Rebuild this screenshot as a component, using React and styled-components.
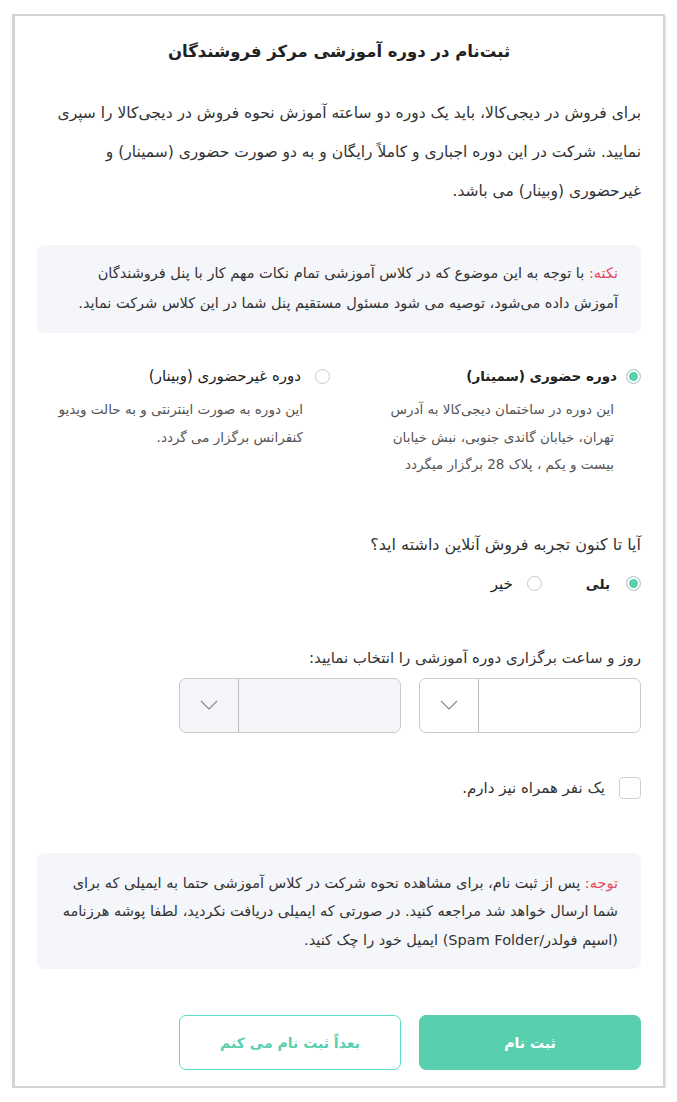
import styled, { createGlobalStyle } from 'styled-components';

const GlobalStyle = createGlobalStyle`
  * { box-sizing: border-box; }
  body {
    margin: 0;
    background: #fff;
    font-family: "DejaVu Sans", "Noto Sans", sans-serif;
    color: #333;
  }
`;

const Modal = styled.div`
  direction: rtl;
  width: 653px;
  margin: 14px 0 0 12px;
  background: #fff;
  border: 2px solid #d4d4d4;
  border-left-width: 3px;
  box-shadow: 1px 2px 2px rgba(0, 0, 0, 0.12);
  padding: 22px 22px 16px 22px;
  display: flex;
  flex-direction: column;
`;

const Title = styled.h1`
  margin: 0;
  font-size: 16.5px;
  line-height: 28px;
  font-weight: 700;
  text-align: center;
  color: #222;
`;

const Intro = styled.p`
  margin: 28px 0 0;
  font-size: 15.5px;
  line-height: 39px;
  color: #333;
`;

const InfoBox = styled.div`
  margin-top: ${({ $top }) => $top}px;
  background: #f5f6fa;
  border-radius: 8px;
  padding: ${({ $pad }) => $pad};
  font-size: ${({ $size }) => $size}px;
  line-height: ${({ $lh }) => $lh}px;
  color: #333;
`;

const Hint = styled.span`
  color: #e6485f;
`;

const Courses = styled.div`
  margin-top: 31px;
  display: grid;
  grid-template-columns: 1fr 1fr;
  column-gap: 18px;
`;

const Course = styled.div`
  display: flex;
  flex-direction: column;
`;

const RadioRow = styled.label`
  display: flex;
  align-items: center;
  gap: ${({ $gap }) => $gap || 12}px;
  height: 24px;
  font-size: ${({ $bold }) => ($bold ? 13.5 : 15)}px;
  font-weight: ${({ $bold }) => ($bold ? 700 : 400)};
  color: #222;
`;

const Radio = styled.span`
  width: 15px;
  height: 15px;
  border-radius: 50%;
  flex-shrink: 0;
  border: 1px solid #c9c9c9;
  background: ${({ $checked }) => ($checked ? '#58d0b0' : '#fff')};
  box-shadow: ${({ $checked }) => ($checked ? 'inset 0 0 0 2px #fff' : 'none')};
`;

const CourseDesc = styled.p`
  margin: 8px 27px 0 0;
  max-width: 250px;
  font-size: 13.5px;
  line-height: 27.5px;
  color: #555;
`;

const Question = styled.div`
  margin-top: ${({ $top }) => $top}px;
  font-size: ${({ $size }) => $size}px;
  line-height: 24px;
  color: #333;
`;

const Choices = styled.div`
  margin-top: 15px;
  display: flex;
  gap: 44px;
`;

const Selects = styled.div`
  margin-top: 8px;
  display: flex;
  gap: 18px;
`;

const Select = styled.div`
  width: 222px;
  height: 55px;
  border: 1px solid #cbcbcb;
  border-radius: 7px;
  background: ${({ $disabled }) => ($disabled ? '#f5f6fa' : '#fff')};
  display: flex;
`;

const SelectValue = styled.div`
  flex: 1;
`;

const SelectArrow = styled.div`
  width: 59px;
  border-right: 1px solid #bdbdbd;
  display: flex;
  align-items: center;
  justify-content: center;
`;

const CheckRow = styled.label`
  margin-top: 44px;
  display: flex;
  align-items: center;
  gap: 14px;
  font-size: 15px;
  color: #333;
`;

const Checkbox = styled.span`
  width: 22px;
  height: 22px;
  border: 1.5px solid #cfcfcf;
  border-radius: 4px;
  background: #fff;
`;

const Actions = styled.div`
  margin-top: 46px;
  display: flex;
  gap: 18px;
`;

const Button = styled.button`
  width: 222px;
  height: 55px;
  border-radius: 7px;
  font-family: inherit;
  font-size: 14px;
  font-weight: 700;
  cursor: pointer;
  border: 1.5px solid ${({ $primary }) => ($primary ? '#58d0b0' : '#5bdcc4')};
  background: ${({ $primary }) => ($primary ? '#58d0b0' : '#fff')};
  color: ${({ $primary }) => ($primary ? '#fff' : '#58d0b0')};
`;

const Chevron = () => (
  <svg width="18" height="10" viewBox="0 0 18 10">
    <polyline points="1,1 9,9 17,1" fill="none" stroke="#8a8a8a" strokeWidth="1.2" />
  </svg>
);

const App = () => {
  return (
    <>
      <GlobalStyle />
      <Modal>
        <Title>ثبت‌نام در دوره آموزشی مرکز فروشندگان</Title>
        <Intro>
          برای فروش در دیجی‌کالا، باید یک دوره دو ساعته آموزش نحوه فروش در دیجی‌کالا را سپری
          نمایید. شرکت در این دوره اجباری و کاملاً رایگان و به دو صورت حضوری (سمینار) و
          غیرحضوری (وبینار) می باشد.
        </Intro>

        <InfoBox $top={34} $pad="13px 23px 15px 16px" $lh={30} $size={14.5}>
          <Hint>نکته:</Hint> با توجه به این موضوع که در کلاس آموزشی تمام نکات مهم کار با پنل
          فروشندگان آموزش داده می‌شود، توصیه می شود مسئول مستقیم پنل شما در این کلاس شرکت نماید.
        </InfoBox>

        <Courses>
          <Course>
            <RadioRow $bold $gap={9}>
              <Radio $checked />
              دوره حضوری (سمینار)
            </RadioRow>
            <CourseDesc>
              این دوره در ساختمان دیجی‌کالا به آدرس تهران، خیابان گاندی جنوبی، نبش خیابان بیست و
              یکم ، پلاک 28 برگزار میگردد
            </CourseDesc>
          </Course>
          <Course>
            <RadioRow $gap={14}>
              <Radio />
              دوره غیرحضوری (وبینار)
            </RadioRow>
            <CourseDesc>
              این دوره به صورت اینترنتی و به حالت ویدیو کنفرانس برگزار می گردد.
            </CourseDesc>
          </Course>
        </Courses>

        <Question $top={54} $size={16}>آیا تا کنون تجربه فروش آنلاین داشته اید؟</Question>
        <Choices>
          <RadioRow $bold $gap={16}>
            <Radio $checked />
            بلی
          </RadioRow>
          <RadioRow $gap={14}>
            <Radio />
            خیر
          </RadioRow>
        </Choices>

        <Question $top={50} $size={15}>روز و ساعت برگزاری دوره آموزشی را انتخاب نمایید:</Question>
        <Selects>
          <Select>
            <SelectValue />
            <SelectArrow>
              <Chevron />
            </SelectArrow>
          </Select>
          <Select $disabled>
            <SelectValue />
            <SelectArrow>
              <Chevron />
            </SelectArrow>
          </Select>
        </Selects>

        <CheckRow>
          <Checkbox />
          یک نفر همراه نیز دارم.
        </CheckRow>

        <InfoBox $top={54} $pad="16px 23px 15px" $lh={28.5} $size={14.5}>
          <Hint>توجه:</Hint> پس از ثبت نام، برای مشاهده نحوه شرکت در کلاس آموزشی حتما به ایمیلی
          که برای شما ارسال خواهد شد مراجعه کنید. در صورتی که ایمیلی دریافت نکردید، لطفا پوشه
          هرزنامه (اسپم فولدر/Spam Folder) ایمیل خود را چک کنید.
        </InfoBox>

        <Actions>
          <Button $primary>ثبت نام</Button>
          <Button>بعداً ثبت نام می کنم</Button>
        </Actions>
      </Modal>
    </>
  );
};

export default App;
